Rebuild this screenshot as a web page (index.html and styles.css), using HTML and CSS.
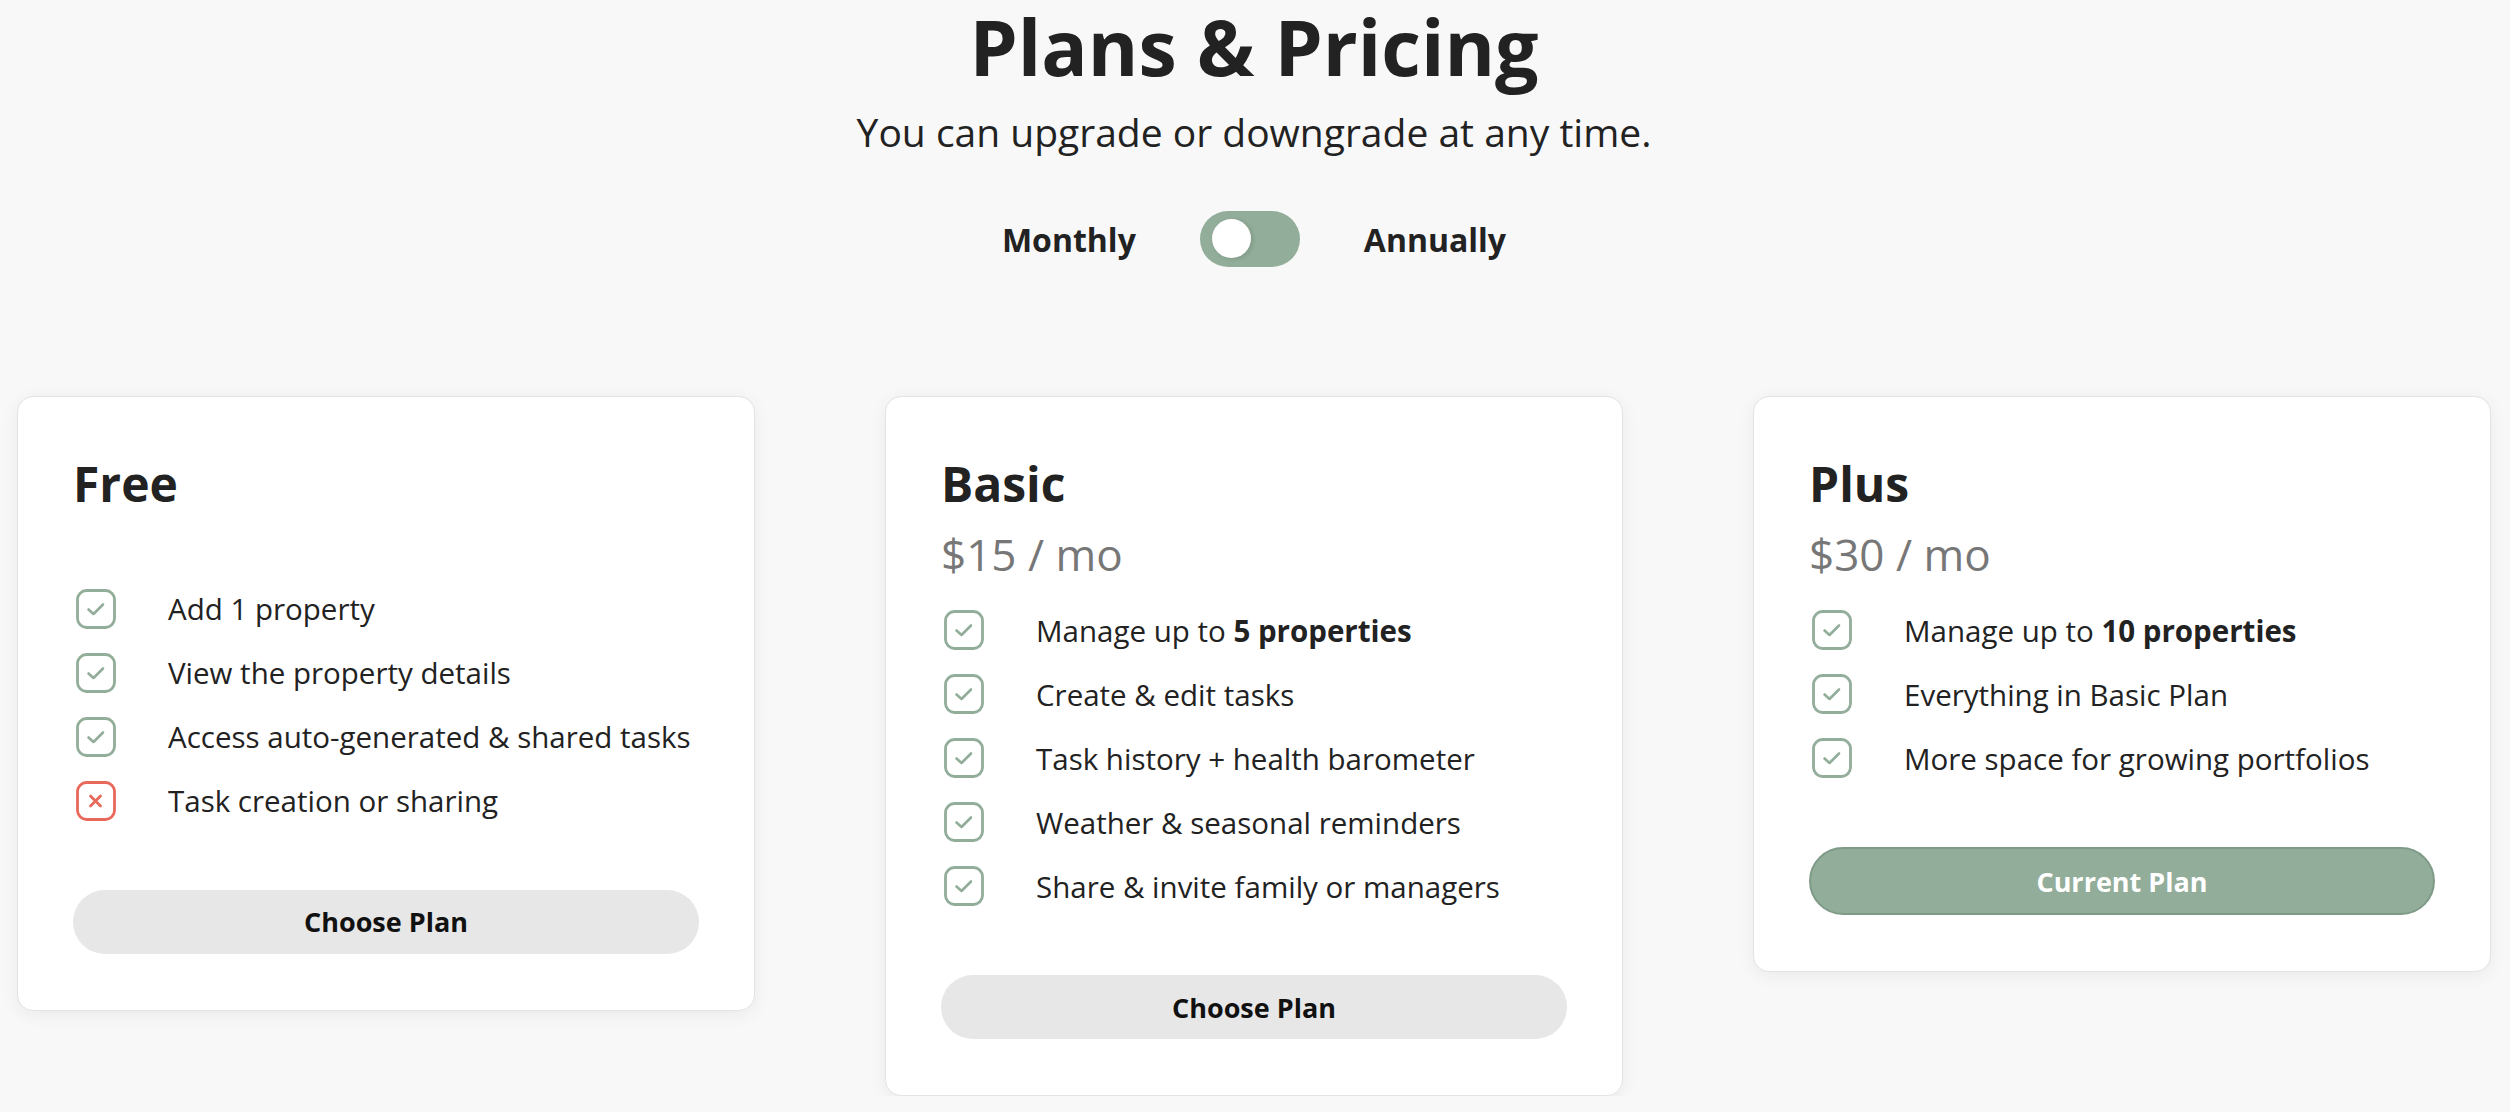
FILE: index.html
```html
<!DOCTYPE html>
<html lang="en">
<head>
<meta charset="utf-8">
<title>Plans &amp; Pricing</title>
<link rel="stylesheet" href="styles.css">
</head>
<body>
<main class="page">
  <header class="intro">
    <h1 class="title">Plans &amp; Pricing</h1>
    <p class="subtitle">You can upgrade or downgrade at any time.</p>
    <div class="billing">
      <span class="billing-label">Monthly</span>
      <span class="switch" role="switch" aria-checked="false"><span class="knob"></span></span>
      <span class="billing-label">Annually</span>
    </div>
  </header>

  <section class="plans">
    <article class="card">
      <h2 class="plan-name">Free</h2>
      <div class="price price-empty"></div>
      <ul class="features">
        <li class="feature"><svg class="ico" viewBox="0 0 40 40"><rect class="box-ok" x="1.5" y="1.5" width="37" height="37" rx="9"/><path class="mark-ok" d="M12.5 20.5 L17.5 25 L27 15.5"/></svg><span>Add 1 property</span></li>
        <li class="feature"><svg class="ico" viewBox="0 0 40 40"><rect class="box-ok" x="1.5" y="1.5" width="37" height="37" rx="9"/><path class="mark-ok" d="M12.5 20.5 L17.5 25 L27 15.5"/></svg><span>View the property details</span></li>
        <li class="feature"><svg class="ico" viewBox="0 0 40 40"><rect class="box-ok" x="1.5" y="1.5" width="37" height="37" rx="9"/><path class="mark-ok" d="M12.5 20.5 L17.5 25 L27 15.5"/></svg><span>Access auto-generated &amp; shared tasks</span></li>
        <li class="feature"><svg class="ico" viewBox="0 0 40 40"><rect class="box-no" x="1.5" y="1.5" width="37" height="37" rx="9"/><path class="mark-no" d="M14.5 15 L24.5 25 M24.5 15 L14.5 25"/></svg><span>Task creation or sharing</span></li>
      </ul>
      <button class="btn btn-choose">Choose Plan</button>
    </article>

    <article class="card">
      <h2 class="plan-name">Basic</h2>
      <div class="price">$15 / mo</div>
      <ul class="features">
        <li class="feature"><svg class="ico" viewBox="0 0 40 40"><rect class="box-ok" x="1.5" y="1.5" width="37" height="37" rx="9"/><path class="mark-ok" d="M12.5 20.5 L17.5 25 L27 15.5"/></svg><span>Manage up to <b>5 properties</b></span></li>
        <li class="feature"><svg class="ico" viewBox="0 0 40 40"><rect class="box-ok" x="1.5" y="1.5" width="37" height="37" rx="9"/><path class="mark-ok" d="M12.5 20.5 L17.5 25 L27 15.5"/></svg><span>Create &amp; edit tasks</span></li>
        <li class="feature"><svg class="ico" viewBox="0 0 40 40"><rect class="box-ok" x="1.5" y="1.5" width="37" height="37" rx="9"/><path class="mark-ok" d="M12.5 20.5 L17.5 25 L27 15.5"/></svg><span>Task history + health barometer</span></li>
        <li class="feature"><svg class="ico" viewBox="0 0 40 40"><rect class="box-ok" x="1.5" y="1.5" width="37" height="37" rx="9"/><path class="mark-ok" d="M12.5 20.5 L17.5 25 L27 15.5"/></svg><span>Weather &amp; seasonal reminders</span></li>
        <li class="feature"><svg class="ico" viewBox="0 0 40 40"><rect class="box-ok" x="1.5" y="1.5" width="37" height="37" rx="9"/><path class="mark-ok" d="M12.5 20.5 L17.5 25 L27 15.5"/></svg><span>Share &amp; invite family or managers</span></li>
      </ul>
      <button class="btn btn-choose">Choose Plan</button>
    </article>

    <article class="card">
      <h2 class="plan-name">Plus</h2>
      <div class="price">$30 / mo</div>
      <ul class="features">
        <li class="feature"><svg class="ico" viewBox="0 0 40 40"><rect class="box-ok" x="1.5" y="1.5" width="37" height="37" rx="9"/><path class="mark-ok" d="M12.5 20.5 L17.5 25 L27 15.5"/></svg><span>Manage up to <b>10 properties</b></span></li>
        <li class="feature"><svg class="ico" viewBox="0 0 40 40"><rect class="box-ok" x="1.5" y="1.5" width="37" height="37" rx="9"/><path class="mark-ok" d="M12.5 20.5 L17.5 25 L27 15.5"/></svg><span>Everything in Basic Plan</span></li>
        <li class="feature"><svg class="ico" viewBox="0 0 40 40"><rect class="box-ok" x="1.5" y="1.5" width="37" height="37" rx="9"/><path class="mark-ok" d="M12.5 20.5 L17.5 25 L27 15.5"/></svg><span>More space for growing portfolios</span></li>
      </ul>
      <button class="btn btn-current">Current Plan</button>
    </article>
  </section>
</main>
</body>
</html>
```

FILE: styles.css
```css
* { box-sizing: border-box; }

html, body {
  margin: 0;
  padding: 0;
  background: #f8f8f8;
}

body {
  font-family: "Open Sans", "Noto Sans", sans-serif;
  color: #222222;
}

.page {
  padding: 0 19px 0 17px;
}

.intro {
  display: flex;
  flex-direction: column;
  align-items: center;
  padding-top: 8px;
}

.title {
  margin: 0;
  font-size: 77px;
  line-height: 1;
  font-weight: 700;
  color: #222222;
}

.subtitle {
  margin: 27px 0 0;
  font-size: 39px;
  line-height: 1;
  font-weight: 400;
  color: #222222;
}

.billing {
  margin-top: 60px;
  display: flex;
  align-items: center;
  gap: 64px;
  height: 56px;
}

.billing-label {
  font-size: 32px;
  font-weight: 700;
  color: #222222;
}

.switch {
  position: relative;
  display: block;
  width: 100px;
  height: 56px;
  border-radius: 28px;
  background: #92ad9a;
}

.knob {
  position: absolute;
  left: 12px;
  top: 8px;
  width: 39px;
  height: 39px;
  border-radius: 50%;
  background: #ffffff;
  box-shadow: 2px 1px 4px rgba(0, 0, 0, 0.12);
}

.plans {
  margin-top: 129px;
  display: flex;
  justify-content: space-between;
  align-items: flex-start;
}

.card {
  flex: 0 0 738px;
  background: #ffffff;
  border: 1px solid #e3e3e3;
  border-radius: 16px;
  box-shadow: 0 4px 18px rgba(0, 0, 0, 0.06);
  padding: 58px 55px 56px;
  display: flex;
  flex-direction: column;
}

.plan-name {
  margin: 0;
  font-size: 48px;
  line-height: 1.2;
  font-weight: 700;
  color: #222222;
}

.price {
  margin-top: 15px;
  font-size: 44px;
  line-height: 1.2;
  font-weight: 400;
  color: #777777;
}

.price-empty {
  height: 31px;
}

.features {
  list-style: none;
  margin: 30px 0 0;
  padding: 0;
  display: flex;
  flex-direction: column;
  gap: 24px;
}

.feature {
  display: flex;
  align-items: center;
  height: 40px;
  font-size: 29.5px;
  white-space: nowrap;
  color: #222222;
}

.feature b {
  font-weight: 700;
}

.ico {
  flex: 0 0 40px;
  width: 40px;
  height: 40px;
  margin-left: 3px;
  margin-right: 52px;
}

.box-ok {
  fill: none;
  stroke: #92ad9a;
  stroke-width: 2.8;
}

.mark-ok {
  fill: none;
  stroke: #92ad9a;
  stroke-width: 2.6;
  stroke-linecap: round;
  stroke-linejoin: round;
}

.box-no {
  fill: none;
  stroke: #e8695b;
  stroke-width: 2.8;
}

.mark-no {
  fill: none;
  stroke: #e8695b;
  stroke-width: 2.8;
  stroke-linecap: round;
}

.btn {
  margin-top: 69px;
  width: 100%;
  height: 64px;
  border: none;
  border-radius: 34px;
  font-family: inherit;
  font-size: 27px;
  font-weight: 700;
  cursor: pointer;
}

.btn-choose {
  background: #e7e7e7;
  color: #111111;
}

.btn-current {
  height: 68px;
  background: #92ad9a;
  border: 2px solid #7f9b88;
  color: #ffffff;
}
```
